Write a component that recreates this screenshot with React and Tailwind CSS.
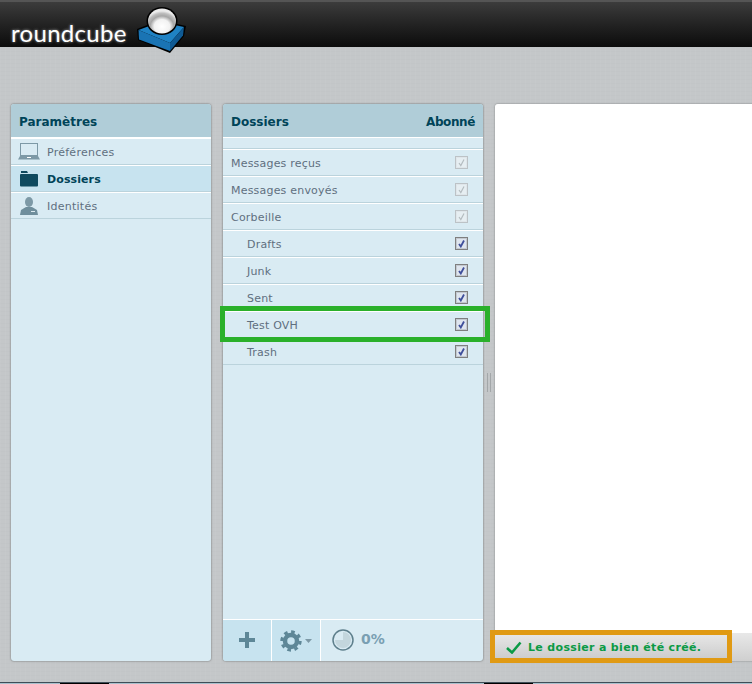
const font = { fontFamily: '"DejaVu Sans", Verdana, sans-serif' };

const subfolders = ["Drafts", "Junk", "Sent", "Test OVH", "Trash"];
const mainfolders = ["Messages reçus", "Messages envoyés", "Corbeille"];

function Logo() {
  return (
    <div className="flex items-start h-full pl-[11px]">
      <span className="w-[124px] mt-[19px] font-['Lato',sans-serif] text-[24px] leading-none text-white tracking-[0.3px] [text-shadow:0_0_3px_rgba(255,255,255,0.6)]">
        roundcube
      </span>
      <svg width="52" height="50" viewBox="0 0 52 50" className="mt-[4px] overflow-visible">
        <defs>
          <radialGradient id="ball" cx="0.5" cy="0.72" r="0.62">
            <stop offset="0" stopColor="#ffffff" />
            <stop offset="0.45" stopColor="#f2f2f2" />
            <stop offset="0.68" stopColor="#a6a6a6" />
            <stop offset="0.85" stopColor="#bdbdbd" />
            <stop offset="1" stopColor="#ececec" />
          </radialGradient>
        </defs>
        <path d="M2 23 L25 14 L51 20 L49 30 L35 47 L3 34 Z" fill="#000" />
        <path d="M3.5 24 L25 16 L49 21 L35 37 Z" fill="#1f82c4" />
        <path d="M3.5 24 L35 37 L35 45 L4 33.5 Z" fill="#1a74b4" />
        <path d="M35 37 L49 21 L48 29.5 L35 45 Z" fill="#0f5a94" />
        <ellipse cx="27" cy="15" rx="15.5" ry="14" fill="#000" />
        <ellipse cx="27" cy="15" rx="14" ry="12.5" fill="url(#ball)" />
      </svg>
    </div>
  );
}

function Laptop() {
  return (
    <svg width="22" height="17" viewBox="0 0 22 17">
      <rect x="2.5" y="0.5" width="17" height="12" fill="none" stroke="#7d99a6" />
      <path d="M2 13h18l2 3.5H0z" fill="#7d99a6" />
      <rect x="9" y="14" width="4" height="1" fill="#fff" />
    </svg>
  );
}

function Folder() {
  return (
    <svg width="18" height="16" viewBox="0 0 18 16">
      <path d="M1 0h6l1 2H1z" fill="#0f4a5f" />
      <rect x="0" y="3" width="18" height="12.5" rx="1" fill="#0f4a5f" />
    </svg>
  );
}

function Person() {
  return (
    <svg width="18" height="18" viewBox="0 0 18 18">
      <ellipse cx="9" cy="5" rx="4" ry="5" fill="#7d99a6" />
      <path d="M6 10h6l5 3 1 5H0l1-5z" fill="#6f8e9c" />
      <rect x="11" y="14" width="4" height="1" fill="#dbe9ef" />
    </svg>
  );
}

function Check({ disabled }) {
  return (
    <span
      className={
        "flex items-center justify-center w-[13px] h-[13px] border " +
        (disabled
          ? "border-[#bcc2c6] bg-[#e6eef2] shadow-[inset_0_0_0_1px_#dfe6ea]"
          : "border-[#7f7f7f] bg-[#dfe5ee] shadow-[inset_0_0_0_1px_#c3c9d0]")
      }
    >
      <svg width="9" height="9" viewBox="0 0 9 9">
        <path
          d="M2 5 L3.8 7.5 L7 1.5"
          fill="none"
          stroke={disabled ? "#b4bcc0" : "#3f4f9b"}
          strokeWidth={disabled ? "1.2" : "1.8"}
        />
      </svg>
    </span>
  );
}

function FolderRow({ name, sub, disabled }) {
  return (
    <div className="flex items-center justify-between h-[27px] border-t border-t-white border-b border-b-[#bbd3dc] pr-[15px]">
      <span className={"pt-[4px] text-[11px] tracking-[0.2px] text-[#5f6f7f] " + (sub ? "pl-[24px]" : "pl-[8px]")}>
        {name}
      </span>
      <Check disabled={disabled} />
    </div>
  );
}

function SectionRow({ icon, label, selected }) {
  return (
    <div
      className={
        "flex items-center h-[27px] border-t border-t-white border-b border-b-[#bbd3dc] " +
        (selected ? "bg-[#c7e3ef]" : "")
      }
    >
      <span className="flex justify-center w-[36px]">{icon}</span>
      <span
        className={
          "pt-[4px] text-[11px] " +
          (selected ? "font-bold text-[#004458] tracking-[0.1px]" : "text-[#5f6f7f] tracking-[0.25px]")
        }
      >
        {label}
      </span>
    </div>
  );
}

function PanelHead({ children }) {
  return (
    <div className="flex items-center justify-between h-[34px] pt-[2px] px-[8px] bg-[#b0cdd8] border-b border-b-white text-[12px] font-bold text-[#004458] rounded-t-[3px]">
      {children}
    </div>
  );
}

export default function App() {
  return (
    <div
      style={font}
      className="relative w-[752px] h-[684px] overflow-hidden bg-[#c4c7c9] bg-[repeating-linear-gradient(90deg,rgba(255,255,255,0.03)_0_1px,transparent_1px_5px),repeating-linear-gradient(0deg,rgba(0,0,0,0.012)_0_1px,transparent_1px_4px)]"
    >
      <header className="h-[47px] border-t-2 border-t-[#555] bg-gradient-to-b from-[#3c3c3c] to-[#0c0c0c]">
        <Logo />
      </header>

      <main className="flex h-[557px] mt-[57px] ml-[11px] gap-[12px]">
        <section className="flex flex-col w-[200px] bg-[#d9ebf3] rounded-[3px] shadow-[0_0_2px_rgba(0,0,0,0.55)]">
          <PanelHead>Paramètres</PanelHead>
          <SectionRow icon={<Laptop />} label="Préférences" />
          <SectionRow icon={<Folder />} label="Dossiers" selected />
          <SectionRow icon={<Person />} label="Identités" />
        </section>

        <section className="flex flex-col w-[260px] bg-[#d9ebf3] rounded-[3px] shadow-[0_0_2px_rgba(0,0,0,0.55)]">
          <PanelHead>
            <span>Dossiers</span>
            <span className="tracking-[-0.4px]">Abonné</span>
          </PanelHead>
          <div className="h-[11px] border-b border-b-[#bbd3dc]" />
          {mainfolders.map((f) => (
            <FolderRow key={f} name={f} disabled />
          ))}
          {subfolders.map((f) => (
            <FolderRow key={f} name={f} sub />
          ))}
          <footer className="flex items-center mt-auto h-[42px] border-t border-t-white">
            <button className="flex items-center justify-center w-[49px] h-full pb-[2px] bg-[#c7e3ef] border-r border-r-white rounded-bl-[3px]">
              <svg width="18" height="18" viewBox="0 0 18 18">
                <path d="M7 1h4v6h6v4h-6v6H7v-6H1V7h6z" fill="#5e8797" />
              </svg>
            </button>
            <button className="flex items-center justify-center w-[49px] h-full gap-[3px] bg-[#c7e3ef] border-r border-r-white">
              <svg width="22" height="22" viewBox="0 0 22 22">
                <circle cx="11" cy="11" r="6" fill="none" stroke="#5e8797" strokeWidth="4.5" />
                <circle
                  cx="11"
                  cy="11"
                  r="9.2"
                  fill="none"
                  stroke="#5e8797"
                  strokeWidth="3"
                  strokeDasharray="3.6 3.6"
                />
              </svg>
              <svg width="7" height="4" viewBox="0 0 7 4">
                <path d="M0 0h7L3.5 4z" fill="#7d99a6" />
              </svg>
            </button>
            <svg width="22" height="22" viewBox="0 0 22 22" className="ml-[11px] mb-[2px]">
              <circle cx="11" cy="11" r="10" fill="#d9ebf3" stroke="#5e7f8c" strokeWidth="1.5" />
              <path d="M11 3 A8 8 0 1 1 3 11 L11 11 Z" fill="#c3d6dd" />
            </svg>
            <span className="ml-[7px] mb-[2px] text-[14px] font-bold text-[#7a9fb2]">0%</span>
          </footer>
        </section>

        <section className="flex flex-col flex-1 -mr-[2px] rounded-l-[3px] overflow-hidden shadow-[0_0_2px_rgba(0,0,0,0.4)]">
          <div className="flex-1 bg-white" />
          <div className="h-[28px] bg-gradient-to-b from-[#e8e8e8] to-[#cfcfcf]" />
        </section>
      </main>

      {/* resize handle */}
      <div className="absolute left-[487px] top-[373px] w-[4px] h-[19px] border-x border-x-[#a3a7a9]" />

      {/* highlight boxes */}
      <div className="absolute left-[220px] top-[306px] w-[270px] h-[36px] border-[5px] border-[#2ab02a]" />
      <div className="absolute flex items-center left-[490px] top-[630px] w-[242px] h-[33px] border-[5px] border-[#e09a14] bg-gradient-to-b from-[#e6e6e6] to-[#cdcdcd]">
        <svg width="16" height="13" viewBox="0 0 16 13" className="ml-[11px] mt-[2px]">
          <path d="M1 7 L6 11.5 L14.5 1.5" fill="none" stroke="#0b9a45" strokeWidth="2.6" />
        </svg>
        <span className="ml-[6px] pt-[3px] text-[11px] font-bold tracking-[0.33px] text-[#0b9a45]">
          Le dossier a bien été créé.
        </span>
      </div>

      {/* window edge at the very bottom */}
      <div className="absolute left-0 right-0 bottom-0 flex h-[2px] border-t border-t-[#3f4d57] bg-[#a8c0cc]">
        <div className="ml-[60px] w-[49px] bg-black" />
        <div className="ml-[375px] w-[49px] bg-black" />
      </div>
    </div>
  );
}
